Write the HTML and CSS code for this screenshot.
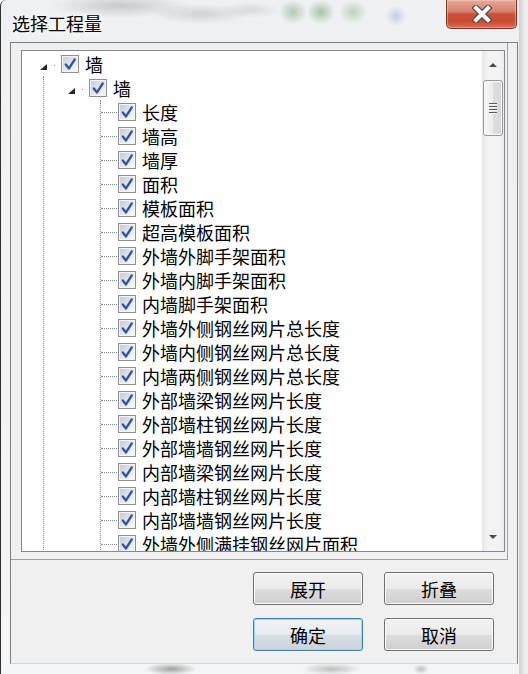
FILE: index.html
```html
<!DOCTYPE html>
<html lang="zh-CN">
<head>
<meta charset="UTF-8">
<title>选择工程量</title>
<link rel="stylesheet" href="styles.css">
</head>
<body>
<!-- 勾选标记，所有复选框共用 -->
<svg class="sprite" aria-hidden="true">
  <symbol id="tick" viewBox="0 0 16 16">
    <path d="M3.8 8.4 L7 12.4 L12.8 3.4" fill="none" stroke="#3553a4" stroke-width="2.4" stroke-linecap="round" stroke-linejoin="round"/>
  </symbol>
</svg>

<div class="window">
  <div class="titlebar">
    <span class="title">选择工程量</span>
    <button class="close" type="button" aria-label="关闭">
      <svg width="22" height="18" viewBox="0 0 22 18">
        <path d="M5 3 L17 15 M17 3 L5 15" stroke="#4c4c4c" stroke-width="6.4" stroke-linecap="square"/>
        <path d="M5 3 L17 15 M17 3 L5 15" stroke="#fafafa" stroke-width="4" stroke-linecap="square"/>
      </svg>
    </button>
  </div>

  <div class="client">
    <div class="panel">
      <div class="tree">
        <div class="tree-body">
          <div class="row lvl0"><span class="exp"></span><span class="stub"></span><span class="cb"><svg><use href="#tick"/></svg></span><span class="label">墙</span></div>
          <div class="guide guide0">
            <div class="row lvl1"><span class="exp"></span><span class="stub"></span><span class="cb"><svg><use href="#tick"/></svg></span><span class="label">墙</span></div>
            <div class="guide guide1">
              <div class="row leaf"><span class="conn"></span><span class="cb"><svg><use href="#tick"/></svg></span><span class="label">长度</span></div>
              <div class="row leaf"><span class="conn"></span><span class="cb"><svg><use href="#tick"/></svg></span><span class="label">墙高</span></div>
              <div class="row leaf"><span class="conn"></span><span class="cb"><svg><use href="#tick"/></svg></span><span class="label">墙厚</span></div>
              <div class="row leaf"><span class="conn"></span><span class="cb"><svg><use href="#tick"/></svg></span><span class="label">面积</span></div>
              <div class="row leaf"><span class="conn"></span><span class="cb"><svg><use href="#tick"/></svg></span><span class="label">模板面积</span></div>
              <div class="row leaf"><span class="conn"></span><span class="cb"><svg><use href="#tick"/></svg></span><span class="label">超高模板面积</span></div>
              <div class="row leaf"><span class="conn"></span><span class="cb"><svg><use href="#tick"/></svg></span><span class="label">外墙外脚手架面积</span></div>
              <div class="row leaf"><span class="conn"></span><span class="cb"><svg><use href="#tick"/></svg></span><span class="label">外墙内脚手架面积</span></div>
              <div class="row leaf"><span class="conn"></span><span class="cb"><svg><use href="#tick"/></svg></span><span class="label">内墙脚手架面积</span></div>
              <div class="row leaf"><span class="conn"></span><span class="cb"><svg><use href="#tick"/></svg></span><span class="label">外墙外侧钢丝网片总长度</span></div>
              <div class="row leaf"><span class="conn"></span><span class="cb"><svg><use href="#tick"/></svg></span><span class="label">外墙内侧钢丝网片总长度</span></div>
              <div class="row leaf"><span class="conn"></span><span class="cb"><svg><use href="#tick"/></svg></span><span class="label">内墙两侧钢丝网片总长度</span></div>
              <div class="row leaf"><span class="conn"></span><span class="cb"><svg><use href="#tick"/></svg></span><span class="label">外部墙梁钢丝网片长度</span></div>
              <div class="row leaf"><span class="conn"></span><span class="cb"><svg><use href="#tick"/></svg></span><span class="label">外部墙柱钢丝网片长度</span></div>
              <div class="row leaf"><span class="conn"></span><span class="cb"><svg><use href="#tick"/></svg></span><span class="label">外部墙墙钢丝网片长度</span></div>
              <div class="row leaf"><span class="conn"></span><span class="cb"><svg><use href="#tick"/></svg></span><span class="label">内部墙梁钢丝网片长度</span></div>
              <div class="row leaf"><span class="conn"></span><span class="cb"><svg><use href="#tick"/></svg></span><span class="label">内部墙柱钢丝网片长度</span></div>
              <div class="row leaf"><span class="conn"></span><span class="cb"><svg><use href="#tick"/></svg></span><span class="label">内部墙墙钢丝网片长度</span></div>
              <div class="row leaf"><span class="conn"></span><span class="cb"><svg><use href="#tick"/></svg></span><span class="label">外墙外侧满挂钢丝网片面积</span></div>
            </div>
          </div>
        </div>

        <!-- 竖向滚动条 -->
        <div class="vscroll">
          <div class="sb-btn up"></div>
          <div class="thumb"><span class="grip"></span></div>
          <div class="sb-track"></div>
          <div class="sb-btn down"></div>
        </div>
      </div>
    </div>

    <div class="actions">
      <button class="btn" type="button">展开</button>
      <button class="btn" type="button">折叠</button>
      <button class="btn default" type="button">确定</button>
      <button class="btn" type="button">取消</button>
    </div>
  </div>
</div>
</body>
</html>
```

FILE: styles.css
```css
/* 整体字体 */
body {
  margin: 0;
  font-family: "Noto Sans CJK SC", "Microsoft YaHei", sans-serif;
  color: #000;
}

.sprite {
  position: absolute;
  width: 0;
  height: 0;
}

/* 窗口外框：Aero 玻璃边框，透出后面模糊的内容 */
.window {
  width: 528px;
  height: 674px;
  box-sizing: border-box;
  padding: 0 10px 10px 9px;
  border-left: 1px solid #2e2e2e;
  border-top-left-radius: 6px;
  display: flex;
  flex-direction: column;
  overflow: hidden;
  background:
    radial-gradient(70px 12px at 120px 6px, rgba(110,110,110,.3), transparent),
    radial-gradient(50px 10px at 200px 14px, rgba(120,120,120,.25), transparent),
    radial-gradient(30px 8px at 250px 10px, rgba(120,120,120,.18), transparent),
    radial-gradient(14px 12px at 292px 12px, rgba(110,150,100,.45), transparent),
    radial-gradient(14px 12px at 320px 12px, rgba(100,150,95,.5), transparent),
    radial-gradient(14px 12px at 352px 12px, rgba(120,160,110,.4), transparent),
    radial-gradient(10px 10px at 395px 16px, rgba(110,140,190,.35), transparent),
    radial-gradient(26px 6px at 170px 669px, rgba(90,90,90,.55), transparent),
    radial-gradient(30px 6px at 330px 669px, rgba(90,90,90,.35), transparent),
    radial-gradient(8px 5px at 420px 669px, rgba(110,110,110,.4), transparent),
    linear-gradient(to right, #cfcfcf, #e9e9e9 50%, #f0f0f0) right top / 9px 100% no-repeat,
    linear-gradient(#eef0f2, #f4f5f6);
}

/* 标题栏 */
.titlebar {
  height: 42px;
  flex-shrink: 0;
  display: flex;
  justify-content: space-between;
  align-items: flex-start;
}
.title {
  margin: 13px 0 0 2px;
  font-size: 18px;
  line-height: 20px;
  text-shadow: 0 0 6px #fff, 0 0 10px #fff;
}
/* 红色关闭按钮 */
.close {
  width: 71px;
  height: 29px;
  margin-right: 1px;
  padding: 0;
  border: 1px solid #7a3426;
  border-top: none;
  border-radius: 0 0 5px 5px;
  background: linear-gradient(#e7aa9b, #d9826f 40%, #c9503a 52%, #c94a31 75%, #dc6f55);
  box-shadow: inset 0 0 0 1px rgba(255,210,200,.45);
  display: flex;
  align-items: center;
  justify-content: center;
}

/* 客户区 */
.client {
  flex: 1;
  display: flex;
  flex-direction: column;
  background: #f0f0f0;
  border: 1px solid #7f7f7f;
  border-bottom-color: #d6d6d6;
}

/* 上半部分：装树的面板 */
.panel {
  height: 517px;
  box-sizing: border-box;
  margin-right: 9px;
  padding: 7px 2px 7px 10px;
  border-right: 1px solid #a0a0a0;
  border-bottom: 1px solid #a0a0a0;
}

.tree {
  height: 100%;
  box-sizing: border-box;
  display: flex;
  border: 1px solid #828790;
  background: #fff;
}
.tree-body {
  flex: 1;
  overflow: hidden;
  padding-top: 1px;
}

/* 每一行节点 */
.row {
  display: flex;
  align-items: center;
  height: 24px;
  white-space: nowrap;
}
.lvl0 { padding-left: 18px; }
.lvl1 { padding-left: 24px; }

/* 展开后的小三角 */
.exp {
  width: 0;
  height: 0;
  margin-top: 5px;
  border-left: 7px solid transparent;
  border-bottom: 6px solid #262626;
}
.stub {
  width: 1px;
  height: 1px;
  margin: 2px 0 0 7px;
  background: #8a8a8a;
}

/* 竖向虚线 */
.guide {
  border-left: 1px dotted #8a8a8a;
}
.guide0 { margin-left: 21px; }
.guide1 { margin-left: 56px; }

/* 叶子节点前的横向虚线 */
.conn {
  width: 16px;
  height: 0;
  border-top: 1px dotted #8a8a8a;
}

/* 复选框 */
.cb {
  width: 18px;
  height: 18px;
  box-sizing: border-box;
  border: 1px solid #8e8f8f;
  background: linear-gradient(135deg, #c6ccd4, #e9ecef 65%, #f8f8f8);
  box-shadow: inset 0 0 0 1px #f4f4f4;
  flex-shrink: 0;
}
.lvl0 .cb { margin-left: 6px; }
.lvl1 .cb { margin-left: 6px; }
.leaf .cb { margin-left: 1px; }
.cb svg {
  display: block;
  width: 16px;
  height: 16px;
}

.label {
  font-size: 18px;
  line-height: 24px;
  margin-left: 6px;
}

/* 滚动条 */
.vscroll {
  width: 22px;
  display: flex;
  flex-direction: column;
  background: linear-gradient(to right, #e8e8e8, #f3f3f3 25%, #f3f3f3 75%, #ececec);
}
.sb-btn {
  height: 28px;
  flex-shrink: 0;
  display: flex;
  align-items: center;
  justify-content: center;
}
.up::before {
  content: "";
  border-left: 4px solid transparent;
  border-right: 4px solid transparent;
  border-bottom: 4px solid #4b4b4b;
}
.down::before {
  content: "";
  border-left: 4px solid transparent;
  border-right: 4px solid transparent;
  border-top: 4px solid #4b4b4b;
}
.thumb {
  height: 56px;
  flex-shrink: 0;
  box-sizing: border-box;
  margin: 1px 1px 0;
  border: 1px solid #979797;
  border-radius: 3px;
  background: linear-gradient(to right, #f6f6f6, #ececec 50%, #dedede 51%, #d6d6d6);
  box-shadow: inset 0 0 0 1px #fbfbfb;
  display: flex;
  align-items: center;
  justify-content: center;
}
.grip {
  width: 8px;
  height: 11px;
  background: repeating-linear-gradient(#5a5a5a 0 1px, #f8f8f8 1px 2px, transparent 2px 3px);
}
.sb-track { flex: 1; }

/* 下方四个按钮 */
.actions {
  flex: 1;
  display: grid;
  grid-template-columns: 110px 110px;
  grid-auto-rows: 33px;
  column-gap: 21px;
  row-gap: 13px;
  justify-content: end;
  align-content: start;
  padding: 12px 23px 0 0;
}
.btn {
  padding: 0;
  font-family: inherit;
  font-size: 18px;
  color: #000;
  border: 1px solid #707070;
  border-radius: 3px;
  background: linear-gradient(#f2f2f2, #ebebeb 50%, #dddddd 51%, #cfcfcf);
  box-shadow: inset 0 0 0 1px #fcfcfc;
}
/* 默认按钮带蓝色边 */
.btn.default {
  border-color: #3c7fb1;
  background: linear-gradient(#eef3f6, #e6ecf0 50%, #d7dfe5 51%, #cad3da);
  box-shadow: inset 0 0 0 1px #9fd6f4;
}
```
